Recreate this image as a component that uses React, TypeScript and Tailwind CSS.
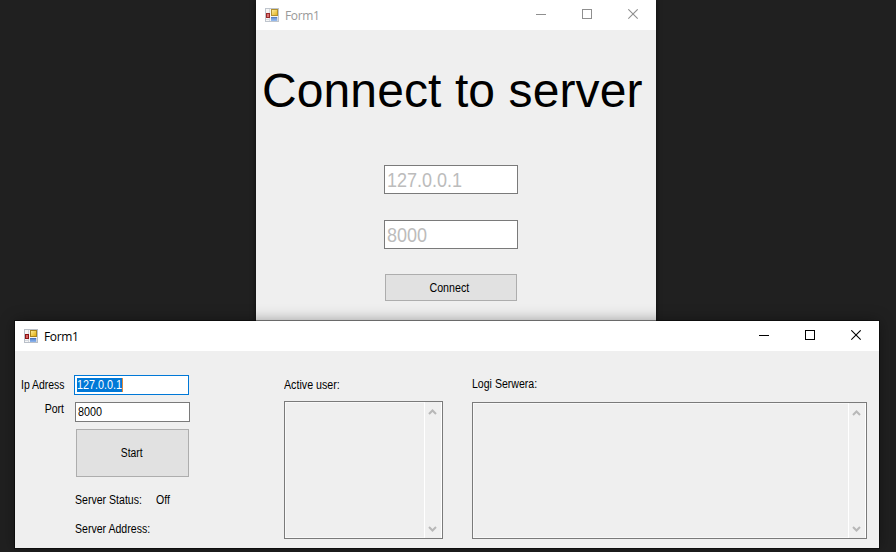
import type { ReactNode } from 'react';

function AppIcon({ faded = false }: { faded?: boolean }) {
  return (
    <svg width="14" height="14" viewBox="0 0 14 14" className={faded ? 'shrink-0 opacity-90' : 'shrink-0'} shapeRendering="crispEdges">
      <defs>
        <linearGradient id="gold" x1="0" y1="0" x2="1" y2="1">
          <stop offset="0" stopColor="#fff0a0" />
          <stop offset="1" stopColor="#e0a800" />
        </linearGradient>
        <linearGradient id="sky" x1="0" y1="0" x2="0" y2="1">
          <stop offset="0" stopColor="#4a78c8" />
          <stop offset="1" stopColor="#8fb8f0" />
        </linearGradient>
      </defs>
      <rect x="0.5" y="0.5" width="13" height="13" fill="#f6f6f6" stroke="#b9bfc8" />
      <path d="M4.5 1v12M1 11.5h4M12.5 9v4" stroke="#d2d7de" fill="none" />
      <rect x="6.5" y="1.5" width="6" height="6" fill="url(#gold)" stroke="#a8841c" />
      <rect x="1.5" y="5.5" width="3" height="4" fill="#d86060" stroke="#8c1414" />
      <rect x="6" y="9" width="6" height="4" fill="url(#sky)" />
      <path d="M6 9.5h6" stroke="#4a74b8" />
    </svg>
  );
}

function TitleBar({ active }: { active: boolean }) {
  const stroke = active ? '#000000' : '#8f8f8f';
  return (
    <header className="flex h-[30px] shrink-0 items-center bg-white pr-[17px] pl-[9px]">
      <AppIcon faded={!active} />
      <span
        className={`ml-[6px] grow pt-px font-['Open_Sans',sans-serif] text-[12px] leading-[18px] tracking-[-0.35px] ${active ? 'text-black' : 'text-[#999999]'}`}
      >
        Form1
      </span>
      <div className="-mt-px flex h-[11px] gap-[35px]">
        <svg width="11" height="11" shapeRendering="crispEdges">
          <path d="M0 5.5h10" stroke={stroke} />
        </svg>
        <svg width="11" height="11" shapeRendering="crispEdges">
          <rect x="0.5" y="0.5" width="9" height="9" fill="none" stroke={stroke} />
        </svg>
        <svg width="11" height="11">
          <path d="M0.3 0.3l9.4 9.4M9.7 0.3l-9.4 9.4" stroke={stroke} strokeWidth="1.1" />
        </svg>
      </div>
    </header>
  );
}

function Label({ children, className = '' }: { children: ReactNode; className?: string }) {
  return (
    <span className={`block text-[12px] leading-[14px] whitespace-nowrap text-black ${className}`}>
      {children}
    </span>
  );
}

function Chevron({ down = false }: { down?: boolean }) {
  return (
    <svg width="9" height="6" viewBox="0 0 9 6" className={down ? 'rotate-180' : ''}>
      <path d="M1 5L4.5 1.5L8 5" fill="none" stroke="#b8b8b8" strokeWidth="2" />
    </svg>
  );
}

function ScrollBox({ className }: { className: string }) {
  return (
    <div className={`flex justify-end border border-[#7a7a7a] bg-[#efefef] shadow-[inset_0_0_0_1px_#f8f8f8] ${className}`}>
      <div className="flex w-[18px] flex-col items-center justify-between border-r border-l border-white bg-[#f0f0f0] pt-[7px] pr-px pb-[6px]">
        <Chevron />
        <Chevron down />
      </div>
    </div>
  );
}

function ConnectWindow() {
  return (
    <section className="absolute top-0 left-[256px] flex h-[330px] w-[400px] flex-col bg-[#efefef] shadow-[0_0_5px_rgba(0,0,0,0.6)]">
      <TitleBar active={false} />
      <h1 className="mt-[33px] ml-[6px] text-[48px] leading-[55px] tracking-[0.1px] whitespace-nowrap text-black">
        Connect to server
      </h1>
      <div className="mt-[47px] ml-[128px] flex flex-col gap-[26px]">
        <div className="flex h-[29px] w-[134px] items-center border border-[#7a7a7a] bg-white pl-[2px] text-[20px] leading-[22px] text-[#bcbcbc]">
          <span className="origin-left scale-x-[0.9]">127.0.0.1</span>
        </div>
        <div className="flex h-[29px] w-[134px] items-center border border-[#7a7a7a] bg-white pl-[2px] text-[20px] leading-[22px] text-[#bcbcbc]">
          <span className="origin-left scale-x-[0.9]">8000</span>
        </div>
      </div>
      <button className="mt-[25px] ml-[129px] flex h-[27px] w-[132px] items-center justify-center border border-[#adadad] bg-[#e1e1e1] pr-[4px]">
        <Label className="scale-x-[0.89]">Connect</Label>
      </button>
    </section>
  );
}

function ServerWindow() {
  return (
    <section className="absolute top-[321px] left-[15px] flex h-[227px] w-[864px] flex-col bg-[#efefef] shadow-[0_0_14px_rgba(0,0,0,0.4),0_0_0_1px_rgba(0,0,0,0.45)]">
      <TitleBar active />
      <main className="flex grow items-start">
        <div className="w-[269px] pt-[24px]">
          <div className="flex h-[20px]">
            <div className="flex w-[59px] items-center pl-[6px]">
              <Label className="origin-left scale-x-[0.87]">Ip Adress</Label>
            </div>
            <div className="flex w-[115px] items-center border border-[#0078d7] bg-white pl-[2px]">
              <span className="flex h-[14px] w-[46px] items-center border-r border-[#e08a3c] bg-[#0078d7]">
                <Label className="origin-left scale-x-[0.9] text-white">127.0.0.1</Label>
              </span>
            </div>
          </div>
          <div className="mt-[7px] flex h-[20px]">
            <div className="flex w-[60px] items-start justify-end pr-[11px]">
              <Label className="origin-right scale-x-[0.88]">Port</Label>
            </div>
            <div className="flex w-[115px] items-center border border-[#7a7a7a] bg-white pl-[2px]">
              <Label className="origin-left scale-x-[0.9]">8000</Label>
            </div>
          </div>
          <button className="mt-[7px] ml-[61px] flex h-[48px] w-[113px] items-center justify-center border border-[#adadad] bg-[#e1e1e1] pr-px">
            <Label className="scale-x-[0.86]">Start</Label>
          </button>
          <div className="mt-[16px] ml-[60px] flex h-[14px]">
            <div className="w-[81px]">
              <Label className="origin-left scale-x-[0.88]">Server Status:</Label>
            </div>
            <Label className="origin-left scale-x-[0.88]">Off</Label>
          </div>
          <div className="mt-[15px] ml-[60px] flex h-[14px]">
            <Label className="origin-left scale-x-[0.88]">Server Address:</Label>
          </div>
        </div>
        <div className="flex w-[188px] flex-col items-start pt-[27px]">
          <Label className="origin-left scale-x-[0.89]">Active user:</Label>
          <ScrollBox className="mt-[9px] h-[138px] w-[159px]" />
        </div>
        <div className="flex flex-col items-start pt-[26px]">
          <Label className="origin-left scale-x-[0.88]">Logi Serwera:</Label>
          <ScrollBox className="mt-[11px] h-[137px] w-[395px]" />
        </div>
      </main>
    </section>
  );
}

export default function App() {
  return (
    <div className="relative h-[552px] w-[896px] overflow-hidden bg-[#202020] font-['Liberation_Sans',sans-serif]">
      <ConnectWindow />
      <ServerWindow />
    </div>
  );
}
